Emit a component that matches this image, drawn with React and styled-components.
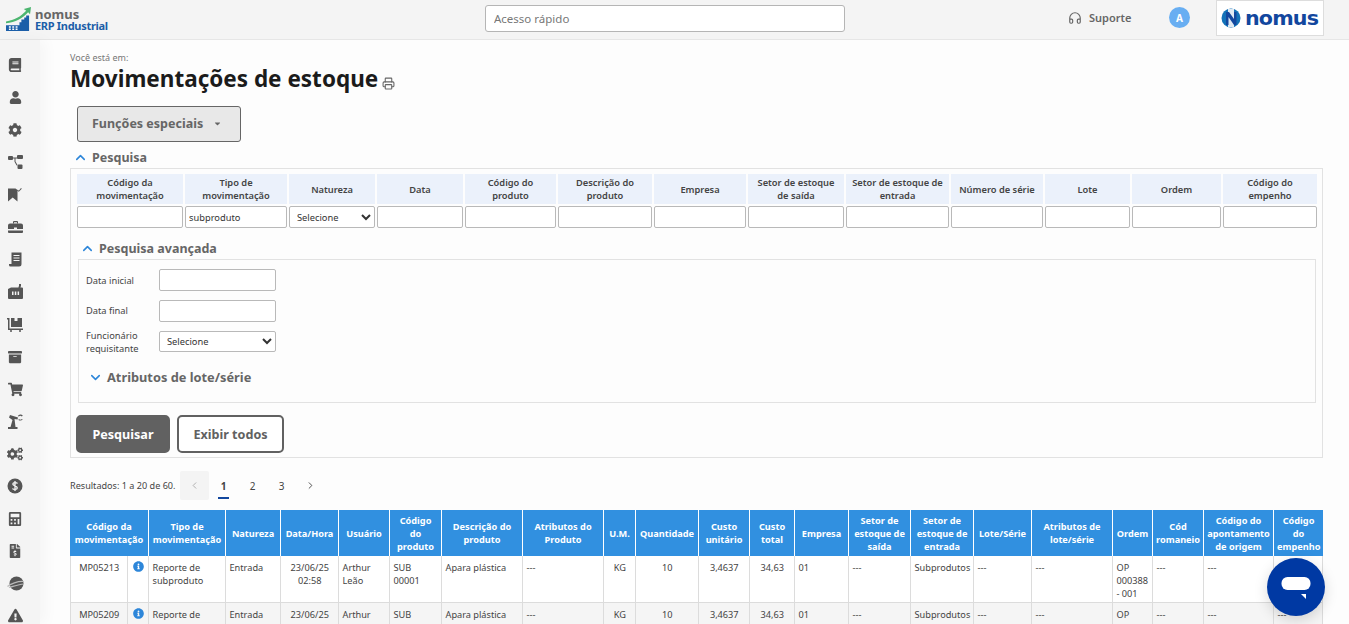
import React from 'react'
import styled, { createGlobalStyle } from 'styled-components'
import { Headphones, Printer, ChevronUp, ChevronDown, ChevronLeft, ChevronRight } from 'lucide-react'
import {
  FaBook, FaUser, FaCog, FaArchive, FaShoppingCart,
  FaCogs, FaCalculator, FaFileInvoiceDollar, FaExclamationTriangle, FaInfoCircle,
  FaCaretDown,
} from 'react-icons/fa'

const GlobalStyle = createGlobalStyle`
  html, body { margin: 0; padding: 0; height: 100%; overflow: hidden; }
  body { background: #fdfdfd; font-family: "Noto Sans", "Open Sans", sans-serif; color: #333; }
  * { box-sizing: border-box; }
`

const Page = styled.div`
  display: flex;
  flex-direction: column;
  height: 100vh;
  overflow: hidden;
`

const TopBar = styled.header`
  display: flex;
  align-items: flex-start;
  flex: 0 0 40px;
  background: #f4f4f4;
  border-bottom: 1px solid #e6e6e6;
`

const Brand = styled.div`
  display: flex;
  align-items: flex-start;
  gap: 4px;
  width: 485px;
  padding: 6px 0 0 6px;
`

const BrandText = styled.div`
  display: flex;
  flex-direction: column;
  margin-top: 2px;
  font-weight: 700;
`

const BrandName = styled.span`
  font-size: 13px;
  line-height: 12px;
  color: #666;
`

const BrandProduct = styled.span`
  font-size: 11px;
  line-height: 12px;
  letter-spacing: -0.3px;
  color: #1b5ea8;
`

const QuickAccess = styled.input`
  width: 360px;
  height: 27px;
  margin-top: 5px;
  padding: 0 8px;
  border: 1px solid #b5b5b5;
  border-radius: 3px;
  background: #fff;
  font: 11.500px "Noto Sans", sans-serif;
  &::placeholder { color: #777; opacity: 1; }
`

const Support = styled.div`
  display: flex;
  align-items: center;
  gap: 7px;
  margin: 10px 0 0 223px;
  width: 101px;
  font-size: 11px;
  font-weight: 600;
  color: #666;
`

const Avatar = styled.div`
  display: flex;
  align-items: center;
  justify-content: center;
  width: 21px;
  height: 21px;
  margin: 7px 26px 0 0;
  border-radius: 50%;
  background: #68aef2;
  color: #fff;
  font-size: 10px;
  font-weight: 700;
`

const LogoBox = styled.div`
  display: flex;
  align-items: center;
  gap: 4px;
  width: 108px;
  height: 36px;
  padding: 0 3px 0 4px;
  background: #fff;
  border: 1px solid #ddd;
`

const LogoWord = styled.span`
  font-family: "DejaVu Sans", sans-serif;
  font-size: 20px;
  font-weight: 700;
  line-height: 1;
  letter-spacing: -0.8px;
  color: #12479e;
  transform: scaleX(1.03);
  transform-origin: left;
`

const Body = styled.div`
  display: flex;
  flex: 1;
  min-height: 0;
`

const Sidebar = styled.nav`
  flex: 0 0 40px;
  padding: 9px 10px 0 0;
  background: #f4f4f4;
  box-shadow: 6px 0 14px rgba(0, 0, 0, 0.03);
  overflow: hidden;
  color: #555;
`

const SideItem = styled.div`
  display: flex;
  align-items: center;
  justify-content: center;
  height: 32.4px;
  font-size: 14px;
`

const Main = styled.main`
  flex: 1;
  min-width: 0;
  padding: 12px 26px 0 30px;
  overflow: hidden;
`

const Crumb = styled.div`
  font-size: 9px;
  line-height: 12px;
  color: #777;
`

const TitleRow = styled.div`
  display: flex;
  align-items: flex-end;
  gap: 4px;
  color: #666;
`

const Title = styled.h1`
  margin: 0;
  font-size: 22.500px;
  line-height: 29px;
  font-weight: 700;
  color: #1b1b1b;
`

const PrintIcon = styled(Printer)`
  margin-bottom: 3px;
`

const SpecialButton = styled.button`
  display: flex;
  align-items: center;
  gap: 10px;
  width: 164px;
  height: 36px;
  margin: 13px 0 0 7px;
  padding: 0 0 2px 14px;
  background: #e8e8e8;
  border: 1px solid #666;
  border-radius: 3px;
  font: 700 12.500px "Noto Sans", sans-serif;
  color: #666;
`

const SectionTitle = styled.div`
  display: flex;
  align-items: center;
  gap: 4px;
  height: ${(p) => p.$height}px;
  padding-top: ${(p) => p.$top}px;
  padding-left: ${(p) => p.$indent}px;
  font-size: ${(p) => p.$size || 12.5}px;
  font-weight: 700;
  color: #666;
  svg { color: #2d86d9; }
`

const SearchBox = styled.section`
  height: 290px;
  padding: 5px 0 0 6px;
  border: 1px solid #e2e2e2;
`

const FilterGrid = styled.div`
  display: grid;
  grid-template-columns: 106px 102px 86px 86px 91px 94px 92px 96px 103px 92px 85px 89px 94px;
  column-gap: 2px;
  row-gap: 2px;
`

const FilterHead = styled.div`
  display: flex;
  align-items: center;
  justify-content: center;
  height: 30px;
  padding: 0 4px;
  background: #ebf1fb;
  text-align: center;
  font-size: 9.300px;
  line-height: 13px;
  font-weight: 600;
  color: #444;
`

const FilterInput = styled.input`
  width: 100%;
  height: 22px;
  padding: 0 3px;
  background: #fff;
  border: 1px solid #b9b9b9;
  border-radius: 2px;
  font: 9.300px "Noto Sans", sans-serif;
  color: #333;
`

const FilterSelect = styled.select`
  width: 100%;
  height: 22px;
  padding: 0 3px;
  background: #fff;
  border: 1px solid #b9b9b9;
  border-radius: 2px;
  font: 9.300px "Noto Sans", sans-serif;
  color: #333;
`

const AdvancedBox = styled.div`
  width: 1238px;
  height: 144px;
  margin: 0 0 12px 1px;
  padding: 4px 0 0 7px;
  border: 1px solid #e2e2e2;
`

const FormRow = styled.div`
  display: flex;
  align-items: center;
  height: 31px;
`

const FormLabel = styled.label`
  width: 73px;
  padding-top: ${(p) => (p.$nudge ? 2 : 0)}px;
  font-size: 9.300px;
  line-height: 13px;
  color: #444;
`

const FormInput = styled.input`
  width: 117px;
  height: 22px;
  background: #fff;
  border: 1px solid #b9b9b9;
  border-radius: 2px;
`

const FormSelect = styled.select`
  width: 117px;
  height: 21px;
  padding: 0 3px;
  background: #fff;
  border: 1px solid #b9b9b9;
  border-radius: 2px;
  font: 9.300px "Noto Sans", sans-serif;
  color: #333;
`

const ButtonRow = styled.div`
  display: flex;
  gap: 7px;
  margin-left: -1px;
`

const SearchButton = styled.button`
  width: ${(p) => (p.$outline ? 107 : 94)}px;
  height: 38px;
  padding: 0;
  background: ${(p) => (p.$outline ? '#fff' : '#616161')};
  border: 2px solid #616161;
  border-radius: 5px;
  font: 700 12.600px "Noto Sans", sans-serif;
  color: ${(p) => (p.$outline ? '#616161' : '#fff')};
`

const Pager = styled.div`
  display: flex;
  align-items: center;
  height: 29px;
  margin: 13px 0 10px;
  font-size: 9.100px;
  color: #444;
`

const PagerInfo = styled.span`
  width: 110px;
  white-space: nowrap;
`

const PageLink = styled.span`
  position: relative;
  display: flex;
  align-items: center;
  justify-content: center;
  width: 29px;
  height: 29px;
  font-size: 10px;
  font-weight: ${(p) => (p.$active ? 700 : 400)};
  color: ${(p) => (p.$disabled ? '#aaa' : '#444')};
  background: ${(p) => (p.$disabled ? '#f4f4f4' : 'transparent')};
  border-radius: 2px;
  ${(p) => p.$active && `
    &::after {
      content: "";
      position: absolute;
      left: 9px;
      right: 9px;
      bottom: 1px;
      height: 2px;
      background: #12479e;
    }
  `}
`

const Results = styled.table`
  width: 1253px;
  table-layout: fixed;
  border-collapse: separate;
  border-spacing: 0;
`

const Th = styled.th`
  height: 46px;
  padding: 0 3px;
  background: #3190e0;
  border-left: 1px solid #fff;
  text-align: center;
  font-size: 9.200px;
  line-height: 13px;
  font-weight: 700;
  color: #fff;
  &:first-child { border-left: 0; padding: 0 1px; }
`

const Td = styled.td`
  height: 47px;
  padding: 5px 3px 2px 3.500px;
  vertical-align: top;
  text-align: ${(p) => (p.$center ? 'center' : 'left')};
  background: ${(p) => (p.$alt ? '#f5f5f5' : '#fff')};
  border-left: 1px solid #dcdcdc;
  border-bottom: 1px solid #dcdcdc;
  font-size: 9.200px;
  line-height: 13px;
  color: #444;
  &:last-child { border-right: 1px solid #dcdcdc; }
`

const InfoMark = styled(FaInfoCircle)`
  display: block;
  margin: 0 auto;
  color: #2d86d9;
`

const ChatButton = styled.div`
  position: fixed;
  left: 1267px;
  top: 558px;
  display: flex;
  align-items: center;
  justify-content: center;
  width: 58px;
  height: 58px;
  border-radius: 50%;
  background: #0039a3;
  box-shadow: 0 4px 14px rgba(0, 0, 0, 0.15);
`

const sideIcons = [
  <FaBook key="a" />,
  <FaUser key="b" size={13} />,
  <FaCog key="c" />,
  <svg key="d" width="15" height="14" viewBox="0 0 15 14" fill="currentColor">
    <rect x="0" y="1" width="5" height="4" rx="1" />
    <rect x="9" y="0" width="6" height="4" rx="1" />
    <rect x="9.500" y="9.500" width="5" height="4.500" rx="1" />
    <path d="M5 2.400h4v1H7.500v3l2 3.500-.9.500-2.100-3.600V3.400H5z" />
  </svg>,
  <svg key="e" width="14" height="15" viewBox="0 0 14 15" fill="currentColor">
    <path d="M0 1.500h7.500L9.500 3v11.500L4.700 10.500 0 14.500z" />
    <path d="M9 3.500l.8-.8 1 1L13 1l.8.8-3 3z" />
  </svg>,
  <svg key="f" width="15" height="14" viewBox="0 0 15 14" fill="currentColor">
    <path d="M5 3.500V2a1 1 0 0 1 1-1h3a1 1 0 0 1 1 1v1.500H9V2.200H6v1.300z" />
    <path d="M0 9V5.500a2 2 0 0 1 2-2h11a2 2 0 0 1 2 2V9H9V7.500H6V9z" />
    <path d="M0 10.500h15v1.500a1 1 0 0 1-1 1H1a1 1 0 0 1-1-1z" />
  </svg>,
  <svg key="g" width="13" height="15" viewBox="0 0 13 15" fill="currentColor">
    <path fillRule="evenodd" d="M2.500 0.500h10V12a2.500 2.500 0 0 1-2.500 2.500H1.500A1.500 1.500 0 0 1 0 13v-1h2.500zM4.500 3v1h6V3zM4.500 5.500v1h6v-1zM4.500 8v1h6V8z" />
  </svg>,
  <svg key="h" width="15" height="15" viewBox="0 0 15 15" fill="currentColor">
    <path fillRule="evenodd" d="M0 5l3-1.500h7.500V2.500H11V0h2v2.500h-.500v1H14a1 1 0 0 1 1 1V14a1 1 0 0 1-1 1H1a1 1 0 0 1-1-1zM4 7.500V11h1.500V7.500zM6.800 7.500V11h1.500V7.500zM9.600 7.500V11h1.500V7.500z" />
  </svg>,
  <svg key="i" width="16" height="15" viewBox="0 0 16 15" fill="currentColor">
    <path d="M0 1h2.500v10.500H16V13H1V2.500H0z" />
    <path d="M4 1h3.500v3h3V1H15v9H4z" />
    <circle cx="4" cy="14" r="1" />
    <circle cx="13" cy="14" r="1" />
  </svg>,
  <FaArchive key="j" />,
  <FaShoppingCart key="k" size={15} />,
  <svg key="l" width="15" height="15" viewBox="0 0 15 15" fill="currentColor">
    <path d="M0 13h9.500v2H0z" />
    <path d="M2.500 13L4.500 6 1 3.500 2 1l8 2.500-.5 2L6.500 5 7.500 13z" />
    <path d="M14.800 1.500A3.300 3.300 0 0 0 9.800 2l1 .6a2.100 2.100 0 0 1 3-.2zM14.800 5A3.300 3.300 0 0 1 10.500 6l.4-1a2.100 2.100 0 0 0 3 0z" />
  </svg>,
  <FaCogs key="m" size={16} />,
  <svg key="n" width="16" height="16" viewBox="0 0 16 16">
    <circle cx="8" cy="8" r="7.500" fill="currentColor" />
    <path d="M10.500 5.500C10 4.500 6 4 5.800 6c-.2 2 4.600 1.800 4.500 4-.1 2-4.300 1.500-4.800.5M8 3v10" fill="none" stroke="#f4f4f4" strokeWidth="1.300" />
  </svg>,
  <FaCalculator key="o" />,
  <FaFileInvoiceDollar key="p" />,
  <svg key="q" width="17" height="15" viewBox="0 0 17 15">
    <circle cx="9.500" cy="7.500" r="7" fill="currentColor" />
    <path d="M0.500 10.500C3 8 11 5 16.500 5.500M2 11.500C6 10.500 12 8.500 16.500 8" fill="none" stroke="#bbb" strokeWidth="1.200" />
  </svg>,
  <FaExclamationTriangle key="r" size={15} />,
]

const filters = [
  'Código da movimentação', 'Tipo de movimentação', 'Natureza', 'Data', 'Código do produto',
  'Descrição do produto', 'Empresa', 'Setor de estoque de saída', 'Setor de estoque de entrada',
  'Número de série', 'Lote', 'Ordem', 'Código do empenho',
]

const colWidths = [57, 21, 77, 55, 58, 51, 52, 81, 81, 32, 63, 51, 45, 54, 62, 63, 58, 81, 40, 51, 70, 50]

const columns = [
  ['Código da movimentação', 2], ['Tipo de movimentação'], ['Natureza'], ['Data/Hora'], ['Usuário'],
  ['Código do produto'], ['Descrição do produto'], ['Atributos do Produto'], ['U.M.'], ['Quantidade'],
  ['Custo unitário'], ['Custo total'], ['Empresa'], ['Setor de estoque de saída'],
  ['Setor de estoque de entrada'], ['Lote/Série'], ['Atributos de lote/série'], ['Ordem'],
  ['Cód romaneio'], ['Código do apontamento de origem'], ['Código do empenho'],
]

const rows = [
  { code: 'MP05213', time: '23/06/25 02:58' },
  { code: 'MP05209', time: '23/06/25 02:58' },
]

const App = () => {
  return (
    <Page>
      <GlobalStyle />
      <TopBar>
        <Brand>
          <svg width="25" height="25" viewBox="0 0 26 26">
            <path d="M0 16 C9 15 15 11 21 5 L18.500 3 L26 1 L25 8.500 L23 6.500 C17 13 10 17 0 18z" fill="#4cb56f" />
            <path d="M0 20h14v-3h2v-3h3v-2h2v-2h3v16H0z" fill="#1b5ea8" />
            <path d="M3 21h2v1.500H3zM6.500 21h2v1.500h-2zM10 21h2v1.500h-2zM3 23.500h2V25H3zM6.500 23.500h2V25h-2zM10 23.500h2V25h-2z" fill="#fff" />
          </svg>
          <BrandText>
            <BrandName>nomus</BrandName>
            <BrandProduct>ERP Industrial</BrandProduct>
          </BrandText>
        </Brand>
        <QuickAccess placeholder="Acesso rápido" />
        <Support>
          <Headphones size={14} />
          Suporte
        </Support>
        <Avatar>A</Avatar>
        <LogoBox>
          <svg width="20" height="20" viewBox="0 0 20 20">
            <circle cx="10" cy="10" r="9.500" fill="#1272b8" />
            <path d="M7 1h6v18H7z" fill="#dfe9f2" />
            <path d="M5 4h3l5 7V4h2.500v13H13L7.500 9v8H5z" fill="#12479e" />
          </svg>
          <LogoWord>nomus</LogoWord>
        </LogoBox>
      </TopBar>
      <Body>
        <Sidebar>
          {sideIcons.map((icon, i) => (
            <SideItem key={i}>{icon}</SideItem>
          ))}
        </Sidebar>
        <Main>
          <Crumb>Você está em:</Crumb>
          <TitleRow>
            <Title>Movimentações de estoque</Title>
            <PrintIcon size={13} />
          </TitleRow>
          <SpecialButton>
            Funções especiais
            <FaCaretDown size={9} />
          </SpecialButton>
          <SectionTitle $height={26} $top={4} $indent={3}>
            <ChevronUp size={15} strokeWidth={2.5} />
            Pesquisa
          </SectionTitle>
          <SearchBox>
            <FilterGrid>
              {filters.map((f) => (
                <FilterHead key={f}>{f}</FilterHead>
              ))}
              {filters.map((f) =>
                f === 'Natureza' ? (
                  <FilterSelect key={f}>
                    <option>Selecione</option>
                  </FilterSelect>
                ) : (
                  <FilterInput key={f} defaultValue={f === 'Tipo de movimentação' ? 'subproduto' : ''} />
                )
              )}
            </FilterGrid>
            <SectionTitle $height={31} $top={9} $indent={3}>
              <ChevronUp size={15} strokeWidth={2.5} />
              Pesquisa avançada
            </SectionTitle>
            <AdvancedBox>
              <FormRow>
                <FormLabel $nudge>Data inicial</FormLabel>
                <FormInput />
              </FormRow>
              <FormRow>
                <FormLabel>Data final</FormLabel>
                <FormInput />
              </FormRow>
              <FormRow>
                <FormLabel>Funcionário requisitante</FormLabel>
                <FormSelect>
                  <option>Selecione</option>
                </FormSelect>
              </FormRow>
              <SectionTitle $height={30} $top={10} $indent={2} $size={12.8}>
                <ChevronDown size={15} strokeWidth={2.5} />
                Atributos de lote/série
              </SectionTitle>
            </AdvancedBox>
            <ButtonRow>
              <SearchButton>Pesquisar</SearchButton>
              <SearchButton $outline>Exibir todos</SearchButton>
            </ButtonRow>
          </SearchBox>
          <Pager>
            <PagerInfo>Resultados: 1 a 20 de 60.</PagerInfo>
            <PageLink $disabled><ChevronLeft size={11} /></PageLink>
            <PageLink $active>1</PageLink>
            <PageLink>2</PageLink>
            <PageLink>3</PageLink>
            <PageLink><ChevronRight size={11} /></PageLink>
          </Pager>
          <Results>
            <colgroup>
              {colWidths.map((w, i) => (
                <col key={i} width={w} />
              ))}
            </colgroup>
            <thead>
              <tr>
                {columns.map(([label, span]) => (
                  <Th key={label} colSpan={span}>{label}</Th>
                ))}
              </tr>
            </thead>
            <tbody>
              {rows.map((r, i) => {
                const alt = i % 2 === 1
                return (
                  <tr key={r.code}>
                    <Td $alt={alt} $center>{r.code}</Td>
                    <Td $alt={alt}><InfoMark size={11} /></Td>
                    <Td $alt={alt}>Reporte de subproduto</Td>
                    <Td $alt={alt}>Entrada</Td>
                    <Td $alt={alt} $center>{r.time}</Td>
                    <Td $alt={alt}>Arthur Leão</Td>
                    <Td $alt={alt}>SUB 00001</Td>
                    <Td $alt={alt}>Apara plástica</Td>
                    <Td $alt={alt}>---</Td>
                    <Td $alt={alt} $center>KG</Td>
                    <Td $alt={alt} $center>10</Td>
                    <Td $alt={alt} $center>3,4637</Td>
                    <Td $alt={alt} $center>34,63</Td>
                    <Td $alt={alt}>01</Td>
                    <Td $alt={alt}>---</Td>
                    <Td $alt={alt}>Subprodutos</Td>
                    <Td $alt={alt}>---</Td>
                    <Td $alt={alt}>---</Td>
                    <Td $alt={alt}>OP 000388 - 001</Td>
                    <Td $alt={alt}>---</Td>
                    <Td $alt={alt}>---</Td>
                    <Td $alt={alt}>---</Td>
                  </tr>
                )
              })}
            </tbody>
          </Results>
        </Main>
      </Body>
      <ChatButton>
        <svg width="30" height="26" viewBox="0 0 30 26">
          <rect x="0.500" y="3" width="29" height="13" rx="6" fill="#fff" />
          <path d="M20 20h5v5z" fill="#fff" />
        </svg>
      </ChatButton>
    </Page>
  )
}

export default App
